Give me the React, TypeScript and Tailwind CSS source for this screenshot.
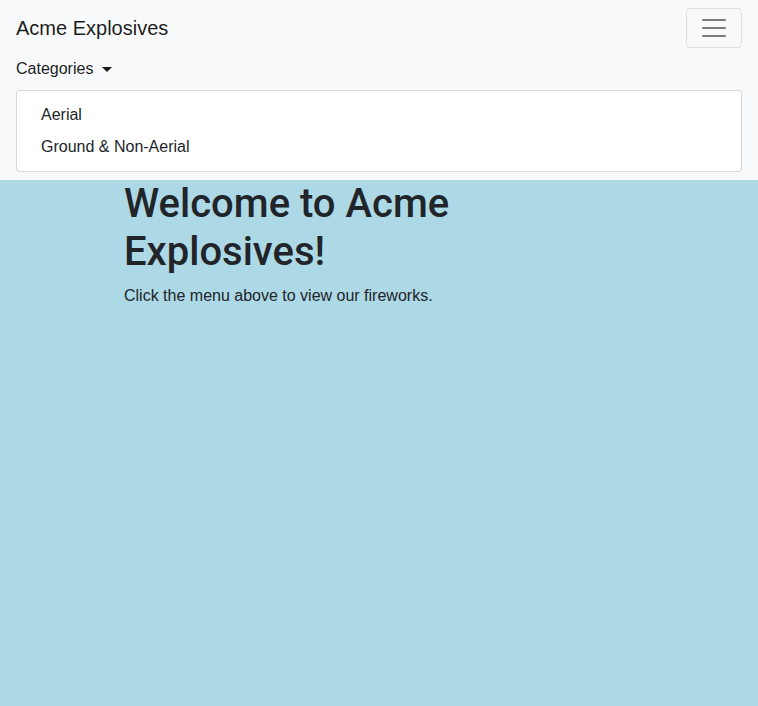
export default function App() {
  return (
    <div className="min-h-[706px] bg-[#add8e6] font-['Liberation_Sans',_Arial,_sans-serif] text-[#212529]">
      <nav className="bg-[#f8f9fa] px-4 py-2">
        <div className="flex items-center justify-between">
          <a className="py-[5px] text-[20px] leading-[30px] text-black/90">Acme Explosives</a>
          <button className="flex h-[40px] w-[56px] items-center justify-center rounded border border-black/10">
            <svg width="30" height="30" viewBox="0 0 30 30">
              <path
                d="M4 7h22M4 15h22M4 23h22"
                stroke="rgba(0,0,0,0.5)"
                strokeWidth="2"
                strokeLinecap="round"
              />
            </svg>
          </button>
        </div>
        <div className="flex items-center pb-[7px] pt-[9px] text-[16px] leading-6 text-black/90">
          Categories
          <span className="ml-[9px] inline-block h-0 w-0 border-x-[5px] border-t-[5px] border-x-transparent border-t-black/90" />
        </div>
        <div className="mt-0.5 rounded border border-black/15 bg-white py-2">
          <a className="block px-6 py-1 text-[16px] leading-6">Aerial</a>
          <a className="block px-6 py-1 text-[16px] leading-6">Ground &amp; Non-Aerial</a>
        </div>
      </nav>
      <main className="ml-[124px] w-[340px]">
        <h1 className="mb-2 font-['Roboto',_sans-serif] text-[40px] font-medium leading-[48px]">
          Welcome to Acme Explosives!
        </h1>
        <p className="text-[16px] leading-6">Click the menu above to view our fireworks.</p>
      </main>
    </div>
  )
}
